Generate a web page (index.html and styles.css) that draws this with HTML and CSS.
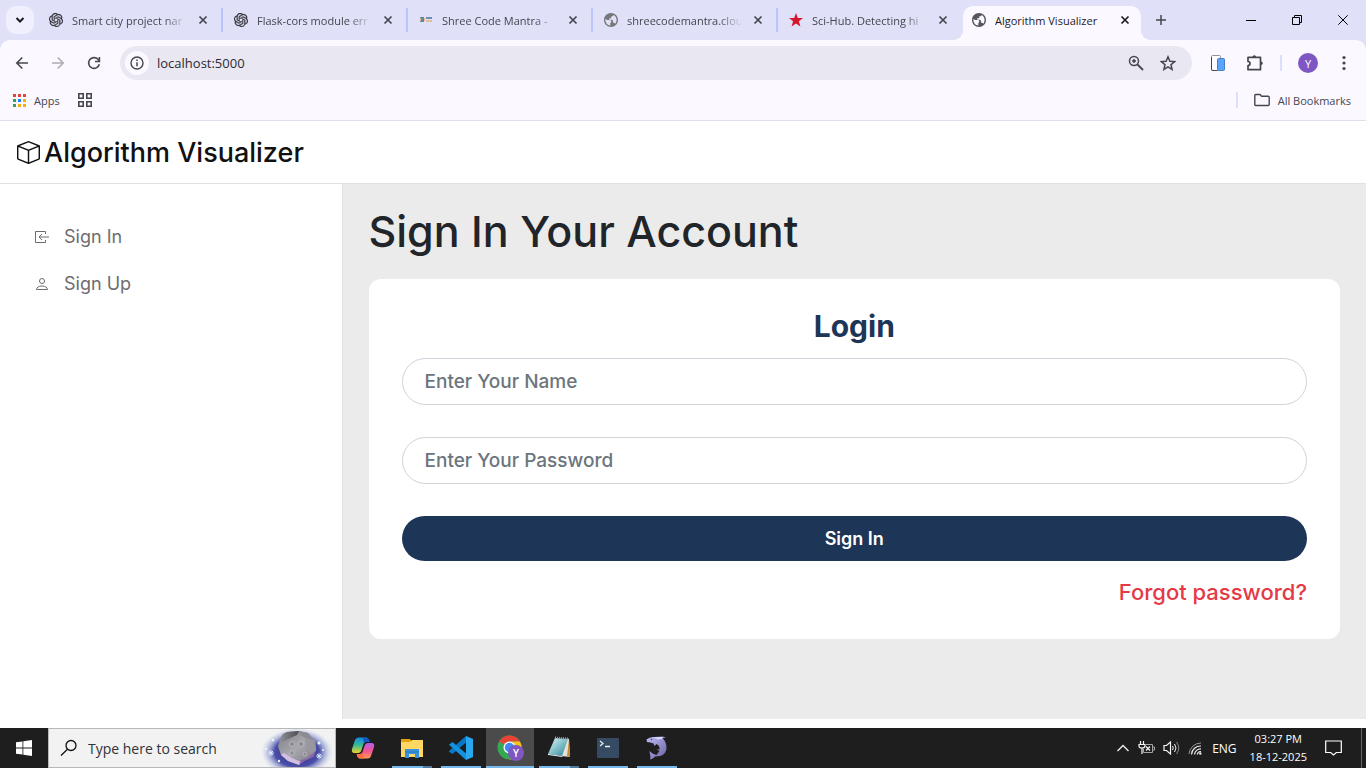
FILE: index.html
```html
<!DOCTYPE html>
<html lang="en">
<head>
    <meta charset="UTF-8">
    <meta name="viewport" content="width=device-width, initial-scale=1.0">
    <title>Algorithm Visualizer</title>
    <link rel="stylesheet" href="styles.css">
</head>
<body>
    <!-- Shared icons -->
    <svg class="icon-defs" width="0" height="0" aria-hidden="true">
        <symbol id="icon-close" viewBox="0 0 10 10">
            <path d="M1.5 1.5l7 7M8.5 1.5l-7 7" fill="none" stroke="currentColor" stroke-width="1.7"/>
        </symbol>
        <symbol id="icon-globe" viewBox="2 2 20 20">
            <path fill="currentColor" d="M12 2C6.48 2 2 6.48 2 12s4.48 10 10 10 10-4.48 10-10S17.52 2 12 2zm-1 17.93c-3.95-.49-7-3.85-7-7.93 0-.62.08-1.21.21-1.79L6 12h4c1.500 0 2.500 1 2.500 2s-1 2-1.500 2v3.930zM17.900 17.390c-.5-.9-1-1.390-1.900-1.390h-1v-2c0-1.500-1-2.500-2.500-2.500H9.500v-2h1.500c1 0 1.500-.6 1.500-1.500V6.500h1.500c1.100 0 1.500-.9 1.500-1.700 2.800 1.300 4.500 4 4.500 7.200 0 2.080-.8 3.970-2.100 5.390z"/>
        </symbol>
        <symbol id="icon-knot" viewBox="0 0 24 24">
            <path fill="currentColor" stroke="currentColor" stroke-width=".5" d="M22.2819 9.8211a5.9847 5.9847 0 0 0-.5157-4.9108 6.0462 6.0462 0 0 0-6.5098-2.9A6.0651 6.0651 0 0 0 4.9807 4.1818a5.9847 5.9847 0 0 0-3.9977 2.9 6.0462 6.0462 0 0 0 .7427 7.0966 5.98 5.98 0 0 0 .511 4.9107 6.051 6.051 0 0 0 6.5146 2.9001A5.9847 5.9847 0 0 0 13.2599 24a6.0557 6.0557 0 0 0 5.7718-4.2058 5.9894 5.9894 0 0 0 3.9977-2.9001 6.0557 6.0557 0 0 0-.7475-7.0729zm-9.022 12.6081a4.4755 4.4755 0 0 1-2.8764-1.0408l.1419-.0804 4.7783-2.7582a.7948.7948 0 0 0 .3927-.6813v-6.7369l2.02 1.1686a.071.071 0 0 1 .038.052v5.5826a4.504 4.504 0 0 1-4.4945 4.4944zm-9.6607-4.1254a4.4708 4.4708 0 0 1-.5346-3.0137l.142.0852 4.783 2.7582a.7712.7712 0 0 0 .7806 0l5.8428-3.3685v2.3324a.0804.0804 0 0 1-.0332.0615L9.74 19.9502a4.4992 4.4992 0 0 1-6.1408-1.6464zM2.3408 7.8956a4.485 4.485 0 0 1 2.3655-1.9728V11.6a.7664.7664 0 0 0 .3879.6765l5.8144 3.3543-2.0201 1.1685a.0757.0757 0 0 1-.071 0l-4.8303-2.7865A4.504 4.504 0 0 1 2.3408 7.872zm16.5963 3.8558L13.1038 8.364 15.1192 7.2a.0757.0757 0 0 1 .071 0l4.8303 2.7913a4.4944 4.4944 0 0 1-.6765 8.1042v-5.6772a.79.79 0 0 0-.407-.667zm2.0107-3.0231l-.142-.0852-4.7735-2.7818a.7759.7759 0 0 0-.7854 0L9.409 9.2297V6.8974a.0662.0662 0 0 1 .0284-.0615l4.8303-2.7866a4.4992 4.4992 0 0 1 6.6802 4.66zM8.3065 12.863l-2.02-1.1638a.0804.0804 0 0 1-.038-.0567V6.0742a4.4992 4.4992 0 0 1 7.3757-3.4537l-.142.0805L8.704 5.459a.7948.7948 0 0 0-.3927.6813zm1.0976-2.3654l2.602-1.4998 2.6069 1.4998v2.9994l-2.5974 1.4997-2.6067-1.4997Z"/>
        </symbol>
    </svg>

    <!-- Browser window -->
    <div class="browser">
        <div class="tab-strip">
            <button class="tab-search" aria-label="Search tabs">
                <svg width="10" height="10" viewBox="0 0 10 10"><path d="M1.500 3l3.500 3.500L8.500 3" fill="none" stroke="currentColor" stroke-width="2"/></svg>
            </button>
            <div class="tab">
                <svg class="favicon" width="14" height="14"><use href="#icon-knot"/></svg>
                <span class="tab-title">Smart city project nar</span>
                <button class="tab-close" aria-label="Close tab"><svg width="10" height="10"><use href="#icon-close"/></svg></button>
            </div>
            <div class="tab">
                <svg class="favicon" width="14" height="14"><use href="#icon-knot"/></svg>
                <span class="tab-title">Flask-cors module err</span>
                <button class="tab-close" aria-label="Close tab"><svg width="10" height="10"><use href="#icon-close"/></svg></button>
            </div>
            <div class="tab">
                <svg class="favicon" width="14" height="14" viewBox="0 0 14 14"><rect x="1" y="4" width="4" height="5" fill="#5f87a8"/><path d="M1 5h1v3H1zM5 5h1v3H5z" fill="#e8b98b"/><rect x="7" y="4" width="6" height="2" fill="#6d8fae"/><rect x="7" y="7" width="6" height="2" fill="#e9bd94"/></svg>
                <span class="tab-title">Shree Code Mantra -</span>
                <button class="tab-close" aria-label="Close tab"><svg width="10" height="10"><use href="#icon-close"/></svg></button>
            </div>
            <div class="tab">
                <svg class="favicon globe" width="14" height="14"><use href="#icon-globe"/></svg>
                <span class="tab-title">shreecodemantra.clou</span>
                <button class="tab-close" aria-label="Close tab"><svg width="10" height="10"><use href="#icon-close"/></svg></button>
            </div>
            <div class="tab">
                <svg class="favicon" width="14" height="14" viewBox="0 0 14 14"><path d="M7 0l1.800 4.900 5.200.2-4.100 3.200L11.400 13.500 7 10.500l-4.400 3L4.100 8.300 0 5.100l5.200-.2z" fill="#d5152a"/></svg>
                <span class="tab-title">Sci-Hub. Detecting hi</span>
                <button class="tab-close" aria-label="Close tab"><svg width="10" height="10"><use href="#icon-close"/></svg></button>
            </div>
            <div class="tab active">
                <svg class="favicon" width="14" height="14"><use href="#icon-globe"/></svg>
                <span class="tab-title">Algorithm Visualizer</span>
                <button class="tab-close" aria-label="Close tab"><svg width="10" height="10"><use href="#icon-close"/></svg></button>
            </div>
            <button class="new-tab" aria-label="New tab">
                <svg width="12" height="12" viewBox="0 0 12 12"><path d="M6 1v10M1 6h10" stroke="currentColor" stroke-width="1.5"/></svg>
            </button>
            <div class="window-controls">
                <button aria-label="Minimize"><svg width="10" height="10" viewBox="0 0 10 10"><path d="M0 5.500h10" stroke="#000"/></svg></button>
                <button aria-label="Restore"><svg width="10" height="10" viewBox="0 0 10 10"><path d="M.5 2.500h7v7h-7zM2.500 2.500v-2h7v7h-2" fill="none" stroke="#000"/></svg></button>
                <button aria-label="Close"><svg width="10" height="10" viewBox="0 0 10 10"><path d="M.3.300l9.400 9.400M9.700.300L.3 9.700" stroke="#000"/></svg></button>
            </div>
        </div>

        <div class="toolbar">
            <button class="nav-button" aria-label="Back">
                <svg width="14" height="14" viewBox="0 0 14 14"><path d="M13 7H2M7.300 1.500L1.800 7l5.500 5.500" fill="none" stroke="currentColor" stroke-width="1.600"/></svg>
            </button>
            <button class="nav-button disabled" aria-label="Forward">
                <svg width="14" height="14" viewBox="0 0 14 14"><path d="M1 7h11M6.700 1.500L12.200 7l-5.500 5.500" fill="none" stroke="currentColor" stroke-width="1.600"/></svg>
            </button>
            <button class="nav-button" aria-label="Reload">
                <svg width="14" height="14" viewBox="0 0 14 14"><path d="M12.300 8.300A5.400 5.400 0 1 1 11 3.300L12.300 4.800" fill="none" stroke="currentColor" stroke-width="1.600"/><path d="M12.400 1v4.500H8" fill="none" stroke="currentColor" stroke-width="1.600"/></svg>
            </button>
            <div class="address-bar">
                <button class="site-info" aria-label="Site information">
                    <svg width="14" height="14" viewBox="0 0 14 14"><circle cx="7" cy="7" r="6" fill="none" stroke="currentColor" stroke-width="1.400"/><path d="M7 6.200v4M7 3.600v1.500" stroke="currentColor" stroke-width="1.500"/></svg>
                </button>
                <input class="address" type="text" value="localhost:5000" aria-label="Address">
                <button class="address-action" aria-label="Zoom">
                    <svg width="16" height="16" viewBox="0 0 16 16"><circle cx="6" cy="6" r="4.500" fill="none" stroke="currentColor" stroke-width="1.500"/><path d="M9.500 9.500L15 15" stroke="currentColor" stroke-width="1.800"/><path d="M6 4v4M4 6h4" stroke="currentColor" stroke-width="1.500"/></svg>
                </button>
                <button class="address-action" aria-label="Bookmark">
                    <svg width="16" height="16" viewBox="0 0 16 16"><path d="M8 1.800l1.900 4.400 4.700.4-3.600 3.100 1.100 4.700L8 11.900l-4.100 2.500L5 9.700 1.400 6.600l4.700-.4z" fill="none" stroke="currentColor" stroke-width="1.500"/></svg>
                </button>
            </div>
            <div class="toolbar-actions">
                <button class="device" aria-label="Device extension">
                    <svg width="16" height="18" viewBox="0 0 16 18"><rect x="1.500" y="1.500" width="9" height="15" rx="1" fill="#fff" stroke="#8a93a8"/><path d="M1.500 3v12q0 1.500 1.500 1.500h4" fill="none" stroke="#3f4656"/><rect x="7.500" y="4.500" width="7" height="12" rx="1" fill="#5ca3fb" stroke="#4a7fc4"/></svg>
                </button>
                <button aria-label="Extensions">
                    <svg width="18" height="18" viewBox="0 0 18 18"><path d="M2 3.300h12.500v12.400H2v-4.200a2 2 0 0 0 0-4z" fill="none" stroke="currentColor" stroke-width="1.700" stroke-linejoin="round"/><path d="M6.500 3a1.800 1.800 0 0 1 3.600 0zM15 7.500a1.800 1.800 0 0 1 0 3.600z" fill="currentColor"/></svg>
                </button>
                <span class="divider"></span>
                <button class="profile" aria-label="Profile">Y</button>
                <button class="menu" aria-label="Menu">
                    <svg width="4" height="16" viewBox="0 0 4 16"><g fill="currentColor"><circle cx="2" cy="2.500" r="1.600"/><circle cx="2" cy="8" r="1.600"/><circle cx="2" cy="13.500" r="1.600"/></g></svg>
                </button>
            </div>
        </div>

        <div class="bookmarks">
            <a href="#" class="bookmark">
                <svg width="13" height="13" viewBox="0 0 13 13"><path d="M0 0h3v3H0zM5 0h3v3H5zM10 0h3v3h-3z" fill="#ea4335"/><path d="M0 5h3v3H0zM0 10h3v3H0z" fill="#34a05a"/><path d="M5 5h3v3H5z" fill="#1a85f5"/><path d="M10 5h3v3h-3zM5 10h3v3H5zM10 10h3v3h-3z" fill="#fbad0b"/></svg>
                <span>Apps</span>
            </a>
            <a href="#" class="bookmark" aria-label="Tab groups">
                <svg width="14" height="14" viewBox="0 0 14 14"><path d="M.8.800h4.400v4.400H.8zM8.800.800h4.400v4.400H8.800zM.8 8.800h4.400v4.400H.8zM8.800 8.800h4.400v4.400H8.800z" fill="none" stroke="#45464f" stroke-width="1.600"/></svg>
            </a>
            <div class="all-bookmarks">
                <span class="divider"></span>
                <a href="#" class="bookmark">
                    <svg width="16" height="14" viewBox="0 0 16 14"><path d="M.8 11.500v-9q0-1 1-1H6l1.600 1.700h6.600q1 0 1 1v7.300q0 1-1 1H1.800q-1 0-1-1z" fill="none" stroke="#45464f" stroke-width="1.400"/></svg>
                    <span>All Bookmarks</span>
                </a>
            </div>
        </div>
    </div>

    <!-- Page header -->
    <header>
        <a href="#" class="brand">
            <svg width="23" height="23" viewBox="0 0 16 16" fill="currentColor"><path d="M8.186 1.113a.5.5 0 0 0-.372 0L1.846 3.500 8 5.961 14.154 3.500 8.186 1.113zM15 4.239l-6.500 2.600v7.922l6.500-2.600V4.240zM7.500 14.762V6.838L1 4.239v7.923l6.500 2.600zM7.443.184a1.500 1.500 0 0 1 1.114 0l7.129 2.852A.5.5 0 0 1 16 3.500v8.662a1 1 0 0 1-.629.928l-7.185 2.874a.5.5 0 0 1-.372 0L.63 13.090a1 1 0 0 1-.63-.928V3.500a.5.5 0 0 1 .314-.464L7.443.184z"/></svg>
            <span>Algorithm Visualizer</span>
        </a>
    </header>

    <!-- Page content -->
    <div class="page">
        <nav class="sidebar">
            <ul>
                <li><a href="#">
                    <svg width="16" height="16" viewBox="0 0 16 16"><path d="M11.500 5V2.500H1.500v11h10V11M15 8H5M8 5L5 8l3 3" fill="none" stroke="currentColor"/></svg>
                    <span>Sign In</span>
                </a></li>
                <li><a href="#">
                    <svg width="16" height="16" viewBox="0 0 16 16"><circle cx="8" cy="5" r="2.500" fill="none" stroke="currentColor"/><path d="M2.500 13.500c0-2 2-3.500 5.500-3.500s5.500 1.500 5.500 3.500z" fill="none" stroke="currentColor"/></svg>
                    <span>Sign Up</span>
                </a></li>
            </ul>
        </nav>
        <main>
            <h1>Sign In Your Account</h1>
            <form class="card">
                <h2>Login</h2>
                <input class="field" type="text" placeholder="Enter Your Name" aria-label="Enter Your Name">
                <input class="field" type="password" placeholder="Enter Your Password" aria-label="Enter Your Password">
                <button class="submit" type="button">Sign In</button>
                <a href="#" class="forgot">Forgot password?</a>
            </form>
        </main>
    </div>

    <!-- Taskbar -->
    <footer class="taskbar">
        <button class="start" aria-label="Start">
            <svg width="16" height="16" viewBox="0 0 16 16" fill="#fff"><path d="M0 2.300L6.500 1.400v6.200H0zM7.300 1.300L16 0v7.600H7.300zM0 8.400h6.500v6.200L0 13.700zM7.300 8.400H16V16l-8.700-1.300z"/></svg>
        </button>
        <div class="search">
            <svg width="18" height="18" viewBox="0 0 18 18"><circle cx="11" cy="6.500" r="5" fill="none" stroke="#111" stroke-width="1.300"/><path d="M7.500 10.200L1 16.500" stroke="#111" stroke-width="1.300"/></svg>
            <input type="text" placeholder="Type here to search" aria-label="Type here to search">
            <!-- Asteroid doodle -->
            <svg class="doodle" width="72" height="38" viewBox="0 0 72 38">
                <defs>
                    <radialGradient id="space"><stop offset="0" stop-color="#322482"/><stop offset=".62" stop-color="#4a4fa8"/><stop offset="1" stop-color="#b5c8ec" stop-opacity="0"/></radialGradient>
                    <linearGradient id="rock" x1="0" y1="0" x2="1" y2="1"><stop offset="0" stop-color="#7d7b84"/><stop offset=".5" stop-color="#a9a8ae"/><stop offset="1" stop-color="#77717f"/></linearGradient>
                    <linearGradient id="rock-shade" x1="0" y1="0" x2="1" y2="0"><stop offset="0" stop-color="#8d8b93"/><stop offset="1" stop-color="#4b4a52"/></linearGradient>
                </defs>
                <ellipse cx="36" cy="23" rx="36" ry="24" fill="url(#space)"/>
                <path d="M22 5l4-2 12-1 9 2 7 8 1 9-3 7-9 4-5 4-11-4-7-6-3-9 3-9z" fill="url(#rock)"/>
                <path d="M22 5l4-2 12-1-2 4-11 5-5 2z" fill="url(#rock-shade)"/>
                <path d="M38 2l9 2 7 8-10-3-6-4z" fill="#8c8a93"/>
                <path d="M44 9l10 3 1 9-3 7-6-8z" fill="#98969f"/>
                <path d="M20 26l7 6 11 4 2-3-9-4-8-5z" fill="#d2bfe0"/>
                <path d="M38 36l5-4 9-4 3-7-8 8-7 2z" fill="#8b61b2"/>
                <g fill="#8f8d96" stroke="#c3c1c8" stroke-width=".7"><circle cx="31" cy="15" r="2.700"/><circle cx="40" cy="15" r="2.700"/><circle cx="31" cy="24" r="2.300"/><circle cx="44" cy="25" r="2"/></g>
                <path d="M10 21v6M7 24h6M8 22l4 4M12 22l-4 4M58 24v6M55 27h6M56 25l4 4M60 25l-4 4" stroke="#dff2ff" stroke-width=".9"/>
                <g fill="#e6f5ff"><circle cx="12" cy="11" r="1.300"/><circle cx="5" cy="20" r="1.200"/><circle cx="58" cy="14" r="1.500"/><circle cx="62" cy="21" r="1"/><circle cx="18" cy="32" r="1.200"/></g>
            </svg>
        </div>
        <div class="apps">
            <button class="app" aria-label="Copilot">
                <svg width="24" height="24" viewBox="0 0 24 24">
                    <defs>
                        <linearGradient id="copilot-a" x1="0" y1="0" x2="0" y2="1"><stop offset="0" stop-color="#1687e8"/><stop offset=".5" stop-color="#35bd91"/><stop offset="1" stop-color="#f3d22c"/></linearGradient>
                        <linearGradient id="copilot-b" x1="0" y1="0" x2="0" y2="1"><stop offset="0" stop-color="#b45bed"/><stop offset=".55" stop-color="#f4568c"/><stop offset="1" stop-color="#ff9b55"/></linearGradient>
                    </defs>
                    <path d="M7.500 1.500H15q2 0 2.700 2L18.500 6H15q-2 0-2.500 2l-2 6q-.8 3-3.500 3H3.500Q0 17 1 13L4 4q.8-2.500 3.500-2.500z" fill="url(#copilot-a)"/>
                    <path d="M16.500 22.500H9q-2 0-2.700-2L5.500 18H9q2 0 2.500-2l2-6q.8-3 3.500-3h3.500Q24 7 23 11l-3 9q-.8 2.500-3.500 2.500z" fill="url(#copilot-b)"/>
                    <path d="M12 1.500h3q2 0 2.700 2L18.500 6H15q-1.500 0-2.200 1z" fill="#1257c8"/>
                    <path d="M6 18h3q1.500 0 2.200-1l2 5.500H9q-2 0-2.500-2z" fill="#ff6f45"/>
                </svg>
            </button>
            <button class="app running stacked" aria-label="File Explorer">
                <svg width="24" height="24" viewBox="0 0 24 24"><path d="M1 3h9l1.500 2H23v16H1z" fill="#e7a10c"/><path d="M1 6h9l2-2h11v17H1z" fill="#ffd765"/><path d="M5 22v-9h14v9h-4v-4H9v4z" fill="#3993dc"/><path d="M5 16h14" stroke="#2878bd"/></svg>
            </button>
            <button class="app running" aria-label="Code editor">
                <svg width="24" height="24" viewBox="0 0 24 24"><path d="M17 0v6.500L3.500 18 0 15.700V15z" fill="#0877c4"/><path d="M3.500 6L17 17.500V24L0 8.700z" fill="#1691df"/><path d="M17 0l7 3v18l-7 3z" fill="#29a8f0"/></svg>
            </button>
            <button class="app running current" aria-label="Browser">
                <svg width="26" height="26" viewBox="0 0 26 26"><circle cx="12.500" cy="12.500" r="12" fill="#34a853"/><path d="M12.500.500a12 12 0 0 1 10.400 6H12.500a6 6 0 0 0-5.200 3L2.200 6.500A12 12 0 0 1 12.500.500z" fill="#ea4335"/><path d="M22.900 6.500a12 12 0 0 1-10.400 18l5.200-9a6 6 0 0 0-5.200-9z" fill="#fbc116"/><circle cx="12.500" cy="12.500" r="6" fill="#fff"/><circle cx="12.500" cy="12.500" r="4.700" fill="#4285f4"/></svg>
                <span class="badge">Y</span>
            </button>
            <button class="app running stacked" aria-label="Notepad">
                <svg width="24" height="24" viewBox="0 0 24 24"><defs><linearGradient id="paper" x1="0" y1="0" x2="1" y2="1"><stop offset="0" stop-color="#e3f6f8"/><stop offset=".5" stop-color="#82bfcb"/><stop offset="1" stop-color="#2e8297"/></linearGradient></defs><path d="M20 2l2 1 1 18-9-1z" fill="#e4e1d6"/><path d="M22 3l1 18-3-.5z" fill="#c18b35"/><path d="M8 2l13 1-6 17L1 18z" fill="url(#paper)"/><path d="M1 18l14 2 .5 1L1 19z" fill="#eef8fa"/><path d="M8 1.500l13 1" stroke="#999" stroke-width="2" stroke-dasharray="1 1"/></svg>
            </button>
            <button class="app running" aria-label="Terminal">
                <svg width="22" height="20" viewBox="0 0 22 20"><rect width="22" height="20" rx="1" fill="#344b63"/><path d="M3 3l3 2.500L3 8M8 8.500h5" fill="none" stroke="#e5edf3" stroke-width="1.300"/></svg>
            </button>
            <button class="app running" aria-label="Database">
                <svg width="24" height="24" viewBox="0 0 24 24"><defs><linearGradient id="dolphin" x1="0" y1="0" x2="1" y2="1"><stop offset="0" stop-color="#c3bdf8"/><stop offset="1" stop-color="#6760a4"/></linearGradient></defs><path d="M1.500 3.500Q5 .500 9 1l9-.5 3 1.500h-3.500Q22 7 21.500 13q-1.500 6-6.500 7l-5 .5-1.500 1.500-3 1.500q-1-1.500 0-2.500l-1-6 3 2.500 4 1.500 3-4-3-1.500h3q.5-4-3-5.500l-2 2-1-2.500-3-1-3.500-.5z" fill="url(#dolphin)"/><path d="M8 1.500l9-.5 1 1.500-5 1z" fill="#dedafc"/><circle cx="6.500" cy="3.500" r=".7" fill="#38305c"/></svg>
            </button>
        </div>
        <div class="tray">
            <svg width="14" height="8" viewBox="0 0 14 8"><path d="M1.500 7L7 1.500 12.500 7" fill="none" stroke="#eee" stroke-width="1.400"/></svg>
            <svg width="17" height="14" viewBox="0 0 17 14"><path d="M2.500 0v3M5.500 0v3M1 3.500h6V5q0 2-3 2t-3-2zM4 7v6" fill="none" stroke="#f5f5f5" stroke-width="1.200"/><path d="M8 3.500h6.500v8h-9V8M15 6h1.500v3H15" fill="none" stroke="#a5a5a5"/><path d="M8 5.500l4 4M12 5.500l-4 4" stroke="#f5f5f5" stroke-width="1.200"/></svg>
            <svg width="17" height="14" viewBox="0 0 17 14"><path d="M1 4.500h2.500l4-3.500v12l-4-3.500H1z" fill="none" stroke="#f5f5f5" stroke-width="1.200"/><path d="M9.500 5q1.500 2 0 4M11.500 3q3 4 0 8" fill="none" stroke="#f5f5f5"/><path d="M13.500 1q4.500 6 0 12" fill="none" stroke="#888"/></svg>
            <svg width="14" height="14" viewBox="0 0 14 14"><path d="M1 13A12 12 0 0 1 13 2" fill="none" stroke="#999"/><path d="M3.500 13.500A9 9 0 0 1 13 5M6.500 13.500A6 6 0 0 1 13 8M9.300 13.500A3.500 3.500 0 0 1 13 10.500" fill="none" stroke="#eee" stroke-width="1.200"/><circle cx="12.300" cy="12.500" r="1.200" fill="#eee"/></svg>
            <span class="language">ENG</span>
            <div class="clock">
                <span>03:27 PM</span>
                <span>18-12-2025</span>
            </div>
            <button class="notifications" aria-label="Notifications">
                <svg width="17" height="16" viewBox="0 0 17 16"><path d="M.7 1h15.600v11.500h-5L8.500 15l-2.800-2.500h-5z" fill="none" stroke="#fff" stroke-width="1.200"/></svg>
            </button>
            <span class="show-desktop"></span>
        </div>
    </footer>
</body>
</html>
```
FILE: styles.css
```css
* {
    box-sizing: border-box;
}

body {
    display: flex;
    flex-direction: column;
    min-height: 100vh;
    margin: 0;
    background-color: #fff;
    font-family: 'Inter', sans-serif;
    color: #212529;
}

button {
    display: flex;
    align-items: center;
    justify-content: center;
    padding: 0;
    border: none;
    background: none;
    color: inherit;
    font-family: inherit;
}

input {
    min-width: 0;
    font-family: inherit;
}

a {
    color: inherit;
    text-decoration: none;
}

svg {
    display: block;
    flex-shrink: 0;
}

h1,
h2 {
    margin: 0;
}

.icon-defs {
    position: absolute;
}

/* Browser window */
.browser {
    background-color: #e0e0f8;
    border-bottom: 1px solid #dfdfec;
    color: #45464f;
    font-family: 'Open Sans', 'Noto Sans', sans-serif;
    font-size: 11px;
}

.tab-strip {
    display: flex;
    align-items: center;
    height: 40px;
    padding-left: 6px;
}

.tab-search {
    width: 28px;
    height: 28px;
    margin-right: 4px;
    border-radius: 10px;
    background-color: #f0effd;
    color: #1b1b21;
}

.tab {
    display: flex;
    align-items: center;
    flex: 0 1 185px;
    min-width: 0;
    height: 24px;
    padding: 0 12px 0 11px;
    border-right: 2px solid #bac4fb;
}

.tab:nth-child(6) {
    border-right-color: transparent;
}

.favicon {
    margin-right: 9px;
    color: #33343a;
}

.favicon.globe {
    color: #77777a;
}

.tab-title {
    flex: 1;
    overflow: hidden;
    white-space: nowrap;
    -webkit-mask-image: linear-gradient(to right, #000 80%, transparent);
    mask-image: linear-gradient(to right, #000 80%, transparent);
}

.tab-close {
    width: 12px;
    margin-left: 10px;
}

.tab.active {
    position: relative;
    flex-basis: 178px;
    align-self: flex-end;
    height: 34px;
    padding: 0 10px 6px 9px;
    border: none;
    border-radius: 10px 10px 0 0;
    background-color: #fbf8ff;
    color: #1b1b21;
}

.tab.active .tab-title {
    -webkit-mask-image: none;
    mask-image: none;
}

.tab.active .favicon {
    color: #56575c;
}

/* Curved feet of the active tab */
.tab.active::before,
.tab.active::after {
    content: "";
    position: absolute;
    bottom: 0;
    width: 10px;
    height: 10px;
}

.tab.active::before {
    right: 100%;
    background: radial-gradient(circle at 0 0, transparent 10px, #fbf8ff 10px);
}

.tab.active::after {
    left: 100%;
    background: radial-gradient(circle at 100% 0, transparent 10px, #fbf8ff 10px);
}

.new-tab {
    width: 40px;
    height: 28px;
}

.window-controls {
    display: flex;
    margin-left: auto;
}

.window-controls button {
    width: 46px;
    height: 40px;
}

.toolbar {
    display: flex;
    align-items: center;
    height: 46px;
    padding: 0 12px 0 4px;
    border-radius: 10px 10px 0 0;
    background-color: #fbf8ff;
}

.nav-button {
    width: 36px;
    height: 34px;
}

.nav-button.disabled {
    color: #adacb5;
}

.address-bar {
    display: flex;
    align-items: center;
    flex: 1;
    height: 34px;
    margin-left: 8px;
    padding: 0 8px 0 5px;
    border-radius: 17px;
    background-color: #e9e7f1;
}

.site-info {
    width: 24px;
    height: 24px;
    border-radius: 50%;
    background-color: #fbf8ff;
}

.address {
    flex: 1;
    padding: 0 8px;
    border: none;
    background: none;
    color: #2b2b33;
    font-size: 13px;
}

.address-action {
    width: 32px;
    height: 32px;
}

.toolbar-actions {
    display: flex;
    align-items: center;
    gap: 16px;
    padding-left: 14px;
}

.device {
    width: 24px;
}

.menu {
    width: 20px;
}

.divider {
    width: 2px;
    height: 16px;
    background-color: #dcdffb;
}

.profile {
    width: 20px;
    height: 20px;
    border-radius: 50%;
    background-color: #7e57c2;
    color: #fff;
    font-size: 11px;
}

.bookmarks {
    display: flex;
    align-items: center;
    gap: 18px;
    height: 34px;
    padding: 0 15px 6px 13px;
    background-color: #fbf8ff;
}

.bookmark {
    display: flex;
    align-items: center;
    gap: 8px;
}

.all-bookmarks {
    display: flex;
    align-items: center;
    gap: 16px;
    margin-left: auto;
}

/* Page header */
header {
    display: flex;
    align-items: center;
    height: 63px;
    padding: 0 17px;
    border-bottom: 1px solid #dee2e6;
}

.brand {
    display: flex;
    align-items: center;
    gap: 4px;
    color: #111;
    font-size: 27px;
    font-weight: 500;
}

/* Page content */
.page {
    display: flex;
    flex: 1;
    margin-bottom: 9px;
}

.sidebar {
    box-sizing: content-box;
    flex: 0 0 25%;
    border-right: 1px solid #dee2e6;
}

.sidebar ul {
    margin: 0;
    padding: 29px 34px;
    list-style: none;
}

.sidebar a {
    display: flex;
    align-items: center;
    gap: 14px;
    height: 47px;
    color: #6c6d70;
    font-size: 18px;
}

main {
    flex: 1;
    padding: 23px 26px;
    background-color: #ebebeb;
}

h1 {
    margin-bottom: 24px;
    font-size: 43px;
    font-weight: 500;
    line-height: 48px;
}

.card {
    display: flex;
    flex-direction: column;
    padding: 32px 33px;
    border-radius: 12px;
    background-color: #fff;
}

h2 {
    margin-bottom: 17px;
    color: #1d3557;
    font-size: 30px;
    font-weight: 700;
    line-height: 30px;
    text-align: center;
}

.field {
    height: 47px;
    margin-bottom: 32px;
    padding: 0 22px;
    border: 1px solid #ced4da;
    border-radius: 24px;
    background-color: #fff;
    font-size: 19px;
    font-weight: 500;
}

.field::placeholder {
    color: #6c757d;
}

.submit {
    height: 45px;
    border-radius: 24px;
    background-color: #1d3557;
    color: #fff;
    font-size: 18px;
    font-weight: 600;
}

.forgot {
    align-self: flex-end;
    margin-top: 16px;
    color: #e63946;
    font-size: 22px;
    font-weight: 500;
    line-height: 30px;
}

/* Taskbar */
.taskbar {
    display: flex;
    height: 40px;
    background-color: #1e1e1e;
    color: #fff;
    font-family: 'Open Sans', 'Noto Sans', sans-serif;
}

.start {
    width: 48px;
}

.search {
    display: flex;
    align-items: center;
    width: 288px;
    padding-left: 11px;
    border: 1px solid #b8b8b8;
    background-color: #f2f2f2;
}

.search input {
    flex: 1;
    padding: 0 0 0 10px;
    border: none;
    background: none;
    font-size: 14px;
}

.search input::placeholder {
    color: #2f3338;
}

.doodle {
    margin-right: 2px;
}

.apps {
    display: flex;
    gap: 1px;
    margin-left: 3px;
}

.app {
    position: relative;
    width: 48px;
}

.app.current {
    background-color: #4b4b4b;
}

/* Line under the running apps */
.app.running::after {
    content: "";
    position: absolute;
    right: 4px;
    bottom: 0;
    left: 4px;
    height: 2px;
    background-color: #76b9ed;
}

.app.current::after {
    right: 0;
    left: 0;
}

.app.stacked::after {
    background: linear-gradient(to right, #76b9ed 31px, #527a9b 31px);
}

.badge {
    position: absolute;
    right: 10px;
    bottom: 7px;
    width: 16px;
    height: 16px;
    border-radius: 50%;
    background-color: #7e57c2;
    font-size: 10px;
    font-weight: 600;
    line-height: 16px;
}

.tray {
    display: flex;
    align-items: center;
    margin-left: auto;
}

.tray > svg {
    margin-right: 8px;
}

.language {
    margin: 0 13px 0 2px;
    font-size: 12px;
}

.clock {
    display: flex;
    flex-direction: column;
    align-items: center;
    font-size: 11px;
    line-height: 18px;
}

.notifications {
    width: 17px;
    margin: 0 19px 0 18px;
}

.show-desktop {
    align-self: stretch;
    width: 5px;
    border-left: 1px solid #666;
}
```
